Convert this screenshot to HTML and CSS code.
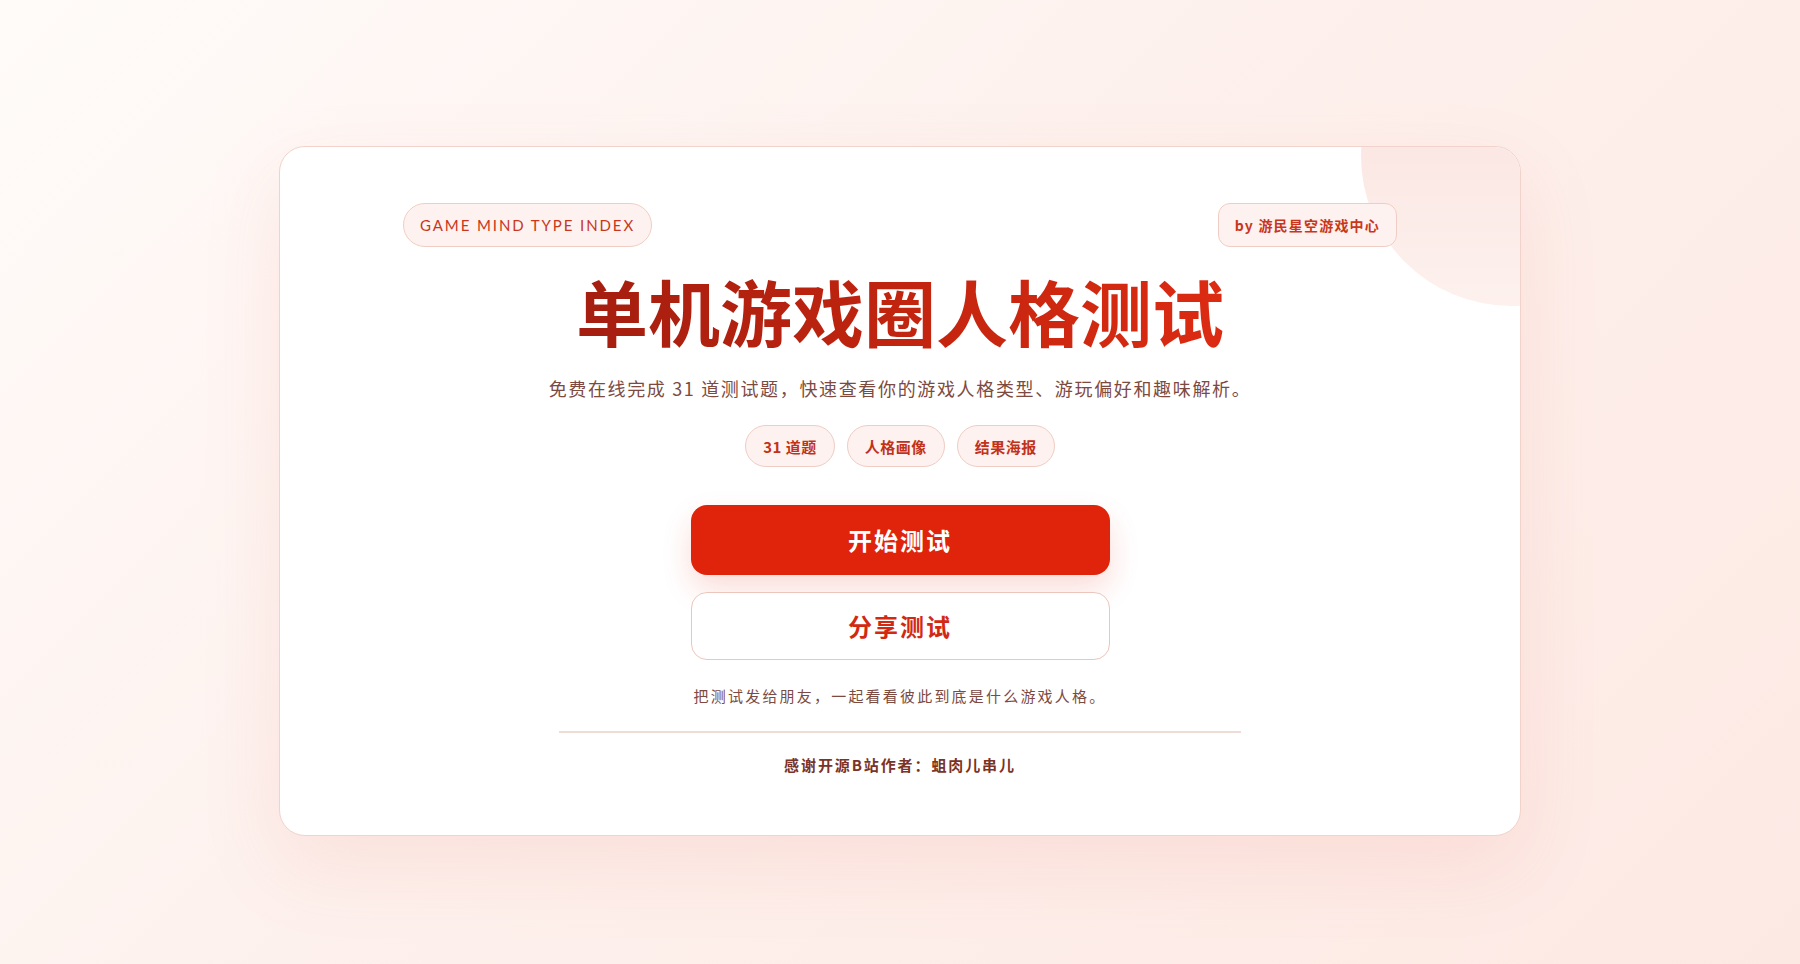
FILE: index.html
```html
<!DOCTYPE html>
<html lang="zh-CN">
<head>
    <meta charset="UTF-8">
    <meta name="viewport" content="width=device-width, initial-scale=1.0">
    <title>单机游戏圈人格测试</title>
    <link rel="stylesheet" href="styles.css">
</head>
<body>
    <div class="page">
        <div class="intro-card">
            <div class="corner-glow"></div>

            <!-- Top badges -->
            <div class="badge-row">
                <span class="badge badge-index">GAME MIND TYPE INDEX</span>
                <span class="badge badge-credit">by 游民星空游戏中心</span>
            </div>

            <h1 class="title">单机游戏圈人格测试</h1>
            <p class="subtitle">免费在线完成 31 道测试题，快速查看你的游戏人格类型、游玩偏好和趣味解析。</p>

            <div class="tag-row">
                <span class="tag">31 道题</span>
                <span class="tag">人格画像</span>
                <span class="tag">结果海报</span>
            </div>

            <!-- Actions -->
            <div class="actions">
                <button class="btn btn-primary">开始测试</button>
                <button class="btn btn-outline">分享测试</button>
            </div>
            <p class="hint">把测试发给朋友，一起看看彼此到底是什么游戏人格。</p>

            <div class="divider"></div>
            <p class="thanks">感谢开源B站作者：蛆肉儿串儿</p>
        </div>
    </div>
</body>
</html>
```

FILE: styles.css
```css
body {
    margin: 0;
    min-height: 100vh;
    font-family: "Noto Sans CJK SC", "Noto Sans", sans-serif;
    background: linear-gradient(135deg, #fffbf9 0%, #fdf1ed 45%, #fde9e4 100%);
}
.page {
    display: flex;
    justify-content: center;
    padding-top: 146px;
}
.intro-card {
    position: relative;
    overflow: hidden;
    box-sizing: border-box;
    width: 1242px;
    padding: 56px 123px 58px;
    background: #fff;
    border: 1px solid #f1d3cb;
    border-radius: 26px;
    box-shadow: 0 30px 80px rgba(232, 130, 110, 0.14);
    display: flex;
    flex-direction: column;
    align-items: center;
}
.corner-glow {
    position: absolute;
    top: -141px;
    right: -141px;
    width: 300px;
    height: 300px;
    border-radius: 50%;
    background: linear-gradient(180deg, #f9dfda 0%, #fdf1ee 100%);
}
.badge-row {
    position: relative;
    align-self: stretch;
    display: flex;
    justify-content: space-between;
}
.badge {
    box-sizing: border-box;
    height: 44px;
    display: inline-flex;
    align-items: center;
    padding: 0 16px;
    background: #fdf2ef;
    border: 1px solid #f0cdc4;
    color: #c9361b;
}
.badge-index {
    border-radius: 22px;
    font-family: "Lato", "Noto Sans", sans-serif;
    font-size: 15px;
    letter-spacing: 1.9px;
}
.badge-credit {
    border-radius: 12px;
    font-size: 14px;
    font-weight: 700;
    letter-spacing: 1.2px;
}
.title {
    margin: 23px 0 0;
    font-size: 72px;
    line-height: 80px;
    font-weight: 700;
    letter-spacing: 0;
    background: linear-gradient(90deg, #a41e0f 0%, #c4250f 55%, #dc2b12 100%);
    -webkit-background-clip: text;
    background-clip: text;
    color: transparent;
}
.subtitle {
    margin: 24px 0 0;
    font-size: 18px;
    line-height: 28px;
    letter-spacing: 1.65px;
    color: #7d4a3f;
}
.tag-row {
    display: flex;
    gap: 12px;
    margin-top: 23px;
}
.tag {
    box-sizing: border-box;
    height: 42px;
    display: inline-flex;
    align-items: center;
    padding: 0 17px;
    border-radius: 21px;
    background: #fdf2ef;
    border: 1px solid #f0cdc4;
    color: #c2321a;
    font-size: 15px;
    font-weight: 700;
    letter-spacing: 0.5px;
}
.actions {
    display: flex;
    flex-direction: column;
    gap: 17px;
    margin-top: 38px;
}
.btn {
    box-sizing: border-box;
    width: 419px;
    padding-bottom: 3px;
    font-family: inherit;
    font-size: 24px;
    font-weight: 700;
    letter-spacing: 2px;
    border-radius: 16px;
    cursor: pointer;
}
.btn-primary {
    height: 70px;
    border: none;
    background: #e0230b;
    color: #fff;
    box-shadow: 0 14px 30px rgba(224, 40, 12, 0.16);
}
.btn-outline {
    height: 68px;
    background: #fff;
    border: 1px solid #ecc6bd;
    color: #d22a12;
}
.hint {
    margin: 24px 0 0;
    font-size: 15px;
    line-height: 24px;
    letter-spacing: 2.2px;
    color: #7d4a3f;
}
.divider {
    width: 682px;
    height: 2px;
    margin-top: 23px;
    background: #efdcd6;
}
.thanks {
    margin: 20px 0 0;
    font-size: 15px;
    line-height: 24px;
    font-weight: 700;
    letter-spacing: 1.9px;
    color: #7a3326;
}
```
